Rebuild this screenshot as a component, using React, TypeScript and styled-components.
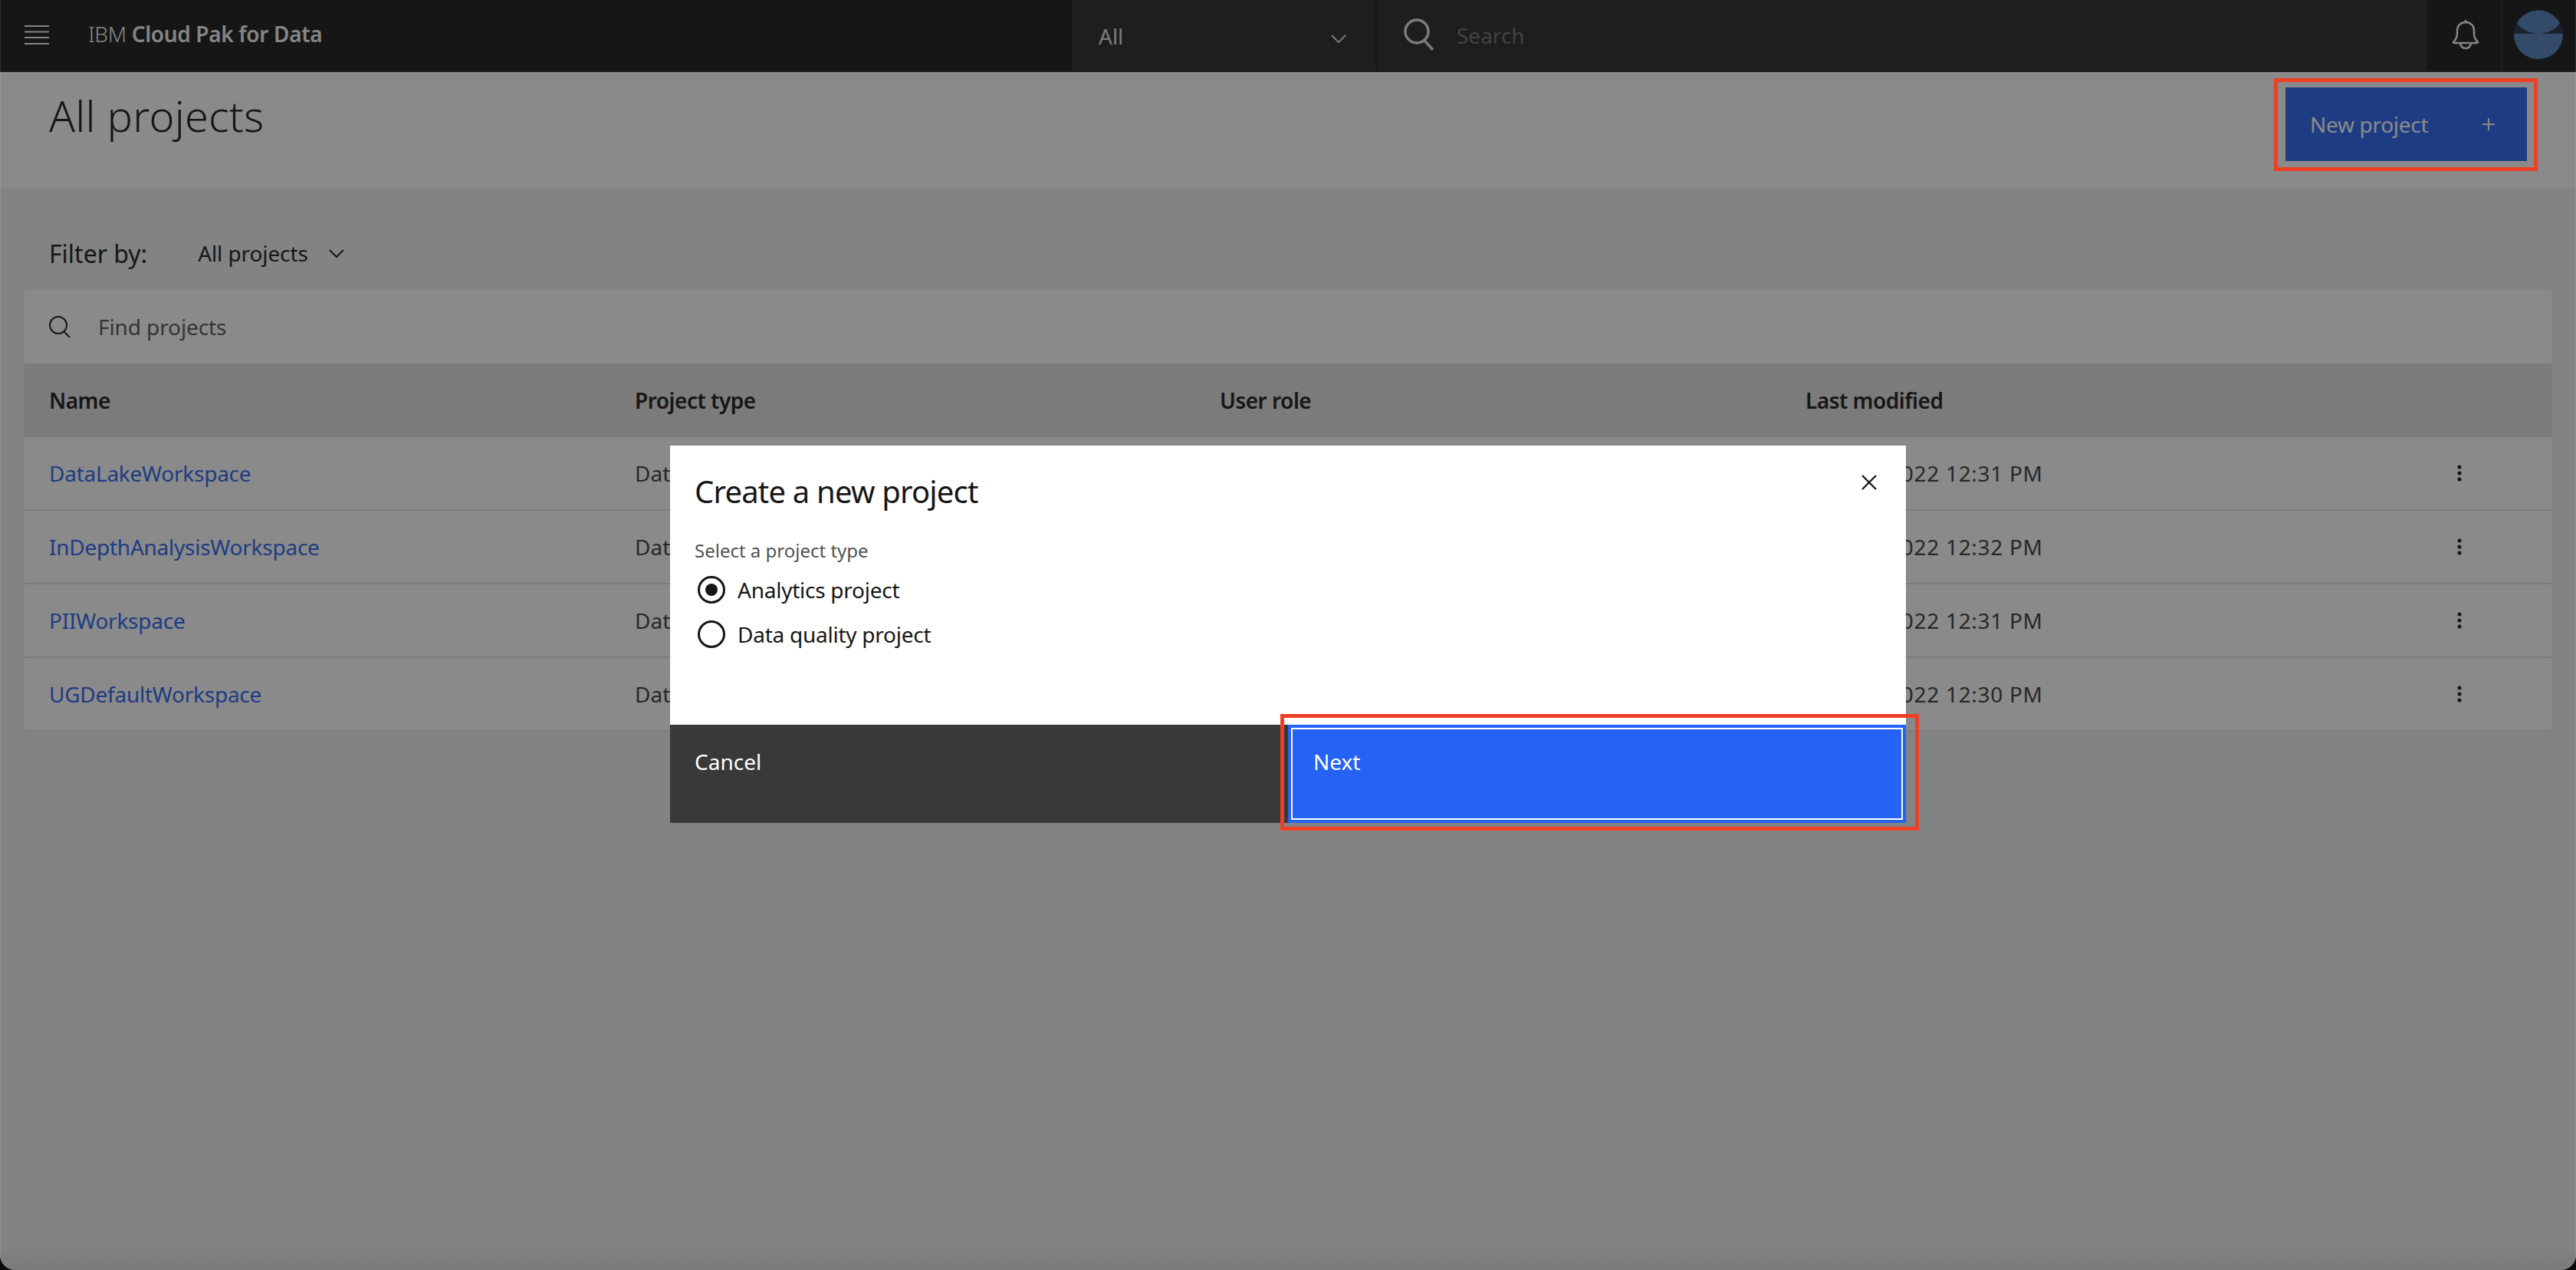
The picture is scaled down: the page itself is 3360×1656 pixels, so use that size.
import React from "react";
import styled, { createGlobalStyle } from "styled-components";

const Global = createGlobalStyle`
  html, body { margin: 0; padding: 0; background: #0c0c0e; }
  body { font-family: "Noto Sans", "Liberation Sans", sans-serif; color: #161616; }
  * { box-sizing: border-box; }
`;

const Page = styled.div`
  position: relative;
  width: 3360px;
  height: 1656px;
  overflow: hidden;
  background: #eef1f0;
  border-radius: 0 0 20px 20px;
  display: flex;
  flex-direction: column;
`;

const TopBar = styled.header`
  height: 94px;
  flex: none;
  display: flex;
  background: #161616;
  border-bottom: 2px solid #262626;
  color: #f4f4f4;
`;
const MenuButton = styled.div`
  width: 115px;
  flex: none;
  padding: 33px 0 0 32px;
`;
const Brand = styled.div`
  width: 1283px;
  flex: none;
  font-size: 28px;
  line-height: 36px;
  padding-top: 26px;
  color: #f4f4f4;
  font-weight: 300;
  letter-spacing: -0.35px;
  b { font-weight: 600; }
`;
const ScopeSelect = styled.div`
  width: 398px;
  flex: none;
  background: #262626;
  border-right: 2px solid #161616;
  display: flex;
  justify-content: space-between;
  padding: 0 38px 0 35px;
  font-size: 28px;
  line-height: 36px;
  color: #e0e0e0;
  span { padding-top: 29px; }
  svg { margin-top: 45px; }
`;
const GlobalSearch = styled.div`
  flex: 1;
  background: #262626;
  display: flex;
  gap: 29px;
  padding: 24px 0 0 35px;
  font-size: 28px;
  line-height: 36px;
  color: #6f6f6f;
  span { padding-top: 4px; }
`;
const BellCell = styled.div`
  width: 98px;
  flex: none;
  border-right: 2px solid #262626;
  padding: 25px 0 0 32px;
`;
const AvatarCell = styled.div`
  width: 95px;
  flex: none;
  margin-left: 1px;
  padding: 13px 0 0 14px;
`;

const PageHead = styled.section`
  height: 152px;
  flex: none;
  background: #fff;
  display: flex;
  justify-content: space-between;
  padding: 20px 64px 0;
`;
const Title = styled.h1`
  margin: 0;
  font-size: 56px;
  line-height: 72px;
  font-weight: 300;
  letter-spacing: 0.2px;
`;
const PrimaryButton = styled.div`
  width: 315px;
  height: 96px;
  background: #2662f0;
  color: #fff;
  display: flex;
  justify-content: space-between;
  padding: 30px 42px 0 32px;
  font-size: 28px;
  line-height: 36px;
  letter-spacing: -0.3px;
`;
const PlusIcon = styled.svg`
  margin-top: 10px;
`;

const Content = styled.main`
  flex: 1;
  padding: 0 32px;
`;
const FilterRow = styled.div`
  height: 132px;
  padding: 36px 32px 0;
  display: flex;
  align-items: center;
  font-size: 32px;
`;
const FilterValue = styled.div`
  margin-left: 66px;
  font-size: 28px;
  display: flex;
  align-items: center;
  gap: 27px;
  letter-spacing: -0.1px;
`;
const FindBar = styled.div`
  height: 96px;
  background: #fff;
  display: flex;
  align-items: center;
  padding-left: 32px;
  gap: 34px;
  font-size: 28px;
  color: #525252;
  letter-spacing: -0.1px;
`;
const TableHeader = styled.div`
  height: 96px;
  background: #e0e0e0;
  display: grid;
  grid-template-columns: 764px 763px 764px 1fr;
  padding-left: 32px;
  align-items: center;
  font-size: 28px;
  font-weight: 600;
  letter-spacing: -0.5px;
`;
const TableRow = styled.div`
  height: 96px;
  background: #fff;
  border-bottom: 2px solid #e0e0e0;
  display: grid;
  grid-template-columns: 764px 763px 764px 1fr 48px;
  padding: 0 96px 0 32px;
  align-items: center;
  font-size: 28px;
  color: #393939;
`;
const ProjectLink = styled.a`
  color: #2662f0;
  text-decoration: none;
  letter-spacing: -0.25px;
`;
const DateCell = styled.div`
  letter-spacing: 0.7px;
`;
const Kebab = styled.div`
  justify-self: center;
  display: flex;
`;

const Overlay = styled.div`
  position: absolute;
  inset: 0;
  background: linear-gradient(to bottom, transparent 1620px, rgba(0, 0, 0, 0.07) 1656px), rgba(22, 22, 22, 0.5);
  box-shadow: inset 1px 0 0 rgba(255, 255, 255, 0.1), inset -1px 0 0 rgba(255, 255, 255, 0.1);
  display: flex;
  justify-content: center;
  padding-top: 581px;
`;
const Modal = styled.div`
  width: 1612px;
  height: 492px;
  background: #fff;
  display: flex;
  flex-direction: column;
  position: relative;
`;
const ModalBody = styled.div`
  flex: 1;
  padding: 32px 32px 0;
`;
const ModalTitle = styled.h2`
  margin: 0;
  font-size: 40px;
  line-height: 56px;
  font-weight: 400;
  letter-spacing: -0.8px;
`;
const FieldLabel = styled.div`
  margin-top: 33px;
  font-size: 24px;
  line-height: 32px;
  color: #525252;
`;
const RadioRow = styled.label`
  display: flex;
  align-items: center;
  height: 58px;
  padding-left: 4px;
  gap: 16px;
  font-size: 28px;
  letter-spacing: -0.25px;
`;
const RadioGroup = styled.div`
  margin-top: 6px;
`;
const RadioMark = styled.span<{ $on?: boolean }>`
  width: 36px;
  height: 36px;
  border-radius: 50%;
  border: 3px solid #161616;
  display: flex;
  align-items: center;
  justify-content: center;
  &::after {
    content: "";
    width: 16px;
    height: 16px;
    border-radius: 50%;
    background: ${(p) => (p.$on ? "#161616" : "transparent")};
  }
`;
const CloseIcon = styled.div`
  position: absolute;
  top: 36px;
  right: 36px;
  width: 24px;
  height: 24px;
`;
const ModalFooter = styled.div`
  height: 128px;
  flex: none;
  display: grid;
  grid-template-columns: 1fr 1fr;
  font-size: 28px;
  line-height: 36px;
  color: #fff;
`;
const CancelButton = styled.div`
  background: #393939;
  padding: 30px 32px 0;
`;
const NextButton = styled.div`
  background: #2563f5;
  padding: 4px;
`;
const NextInner = styled.div`
  height: 100%;
  border: 2px solid #fff;
  padding: 24px 27px 0;
`;

const RedBox = styled.div`
  position: absolute;
  border: 5px solid #ee4025;
  pointer-events: none;
`;
const NewProjectMark = styled(RedBox)`
  left: 2966px;
  top: 102px;
  width: 344px;
  height: 121px;
`;
const NextMark = styled(RedBox)`
  left: 1670px;
  top: 931px;
  width: 833px;
  height: 152px;
`;

const rows = [
  ["DataLakeWorkspace", "Sep 14, 2022 12:31 PM"],
  ["InDepthAnalysisWorkspace", "Sep 14, 2022 12:32 PM"],
  ["PIIWorkspace", "Sep 14, 2022 12:31 PM"],
  ["UGDefaultWorkspace", "Sep 14, 2022 12:30 PM"],
];

const Chevron = ({ w = 20, c = "currentColor" }: { w?: number; c?: string }) => (
  <svg width={w} height={w * 0.55} viewBox="0 0 20 11" fill="none" stroke={c} strokeWidth="2">
    <path d="M1 1l9 9 9-9" />
  </svg>
);

export default function App() {
  return (
    <>
      <Global />
      <Page>
        <TopBar>
          <MenuButton>
            <svg width="32" height="25" viewBox="0 0 32 25" fill="#f4f4f4">
              <rect y="0" width="32" height="2" />
              <rect y="7.5" width="32" height="2" />
              <rect y="15" width="32" height="2" />
              <rect y="23" width="32" height="2" />
            </svg>
          </MenuButton>
          <Brand>
            IBM <b>Cloud Pak for Data</b>
          </Brand>
          <ScopeSelect>
            <span>All</span>
            <Chevron />
          </ScopeSelect>
          <GlobalSearch>
            <svg width="40" height="42" viewBox="0 0 40 42" fill="none" stroke="#e0e0e0" strokeWidth="3.5">
              <circle cx="17" cy="17" r="15" />
              <path d="M27 29l11 12" />
            </svg>
            <span>Search</span>
          </GlobalSearch>
          <BellCell>
            <svg width="36" height="40" viewBox="0 0 36 40" fill="none" stroke="#f4f4f4" strokeWidth="2.6">
              <path d="M18 1v3M2 30c3-3 5-6 5-11v-4C7 8 12 4 18 4s11 4 11 11v4c0 5 2 8 5 11l-1 1H3z" />
              <path d="M11 31c0 4 3 7 7 7s7-3 7-7" />
            </svg>
          </BellCell>
          <AvatarCell>
            <svg width="64" height="64" viewBox="0 0 64 64">
              <circle cx="32" cy="32" r="32" fill="#1e2e42" />
              <path d="M4 17A32 32 0 0 1 60 17C54 26 42 31 32 31C22 31 10 26 4 17Z" fill="#507eba" />
              <path d="M0 31h64v1a32 32 0 0 1-64 0z" fill="#507eba" />
            </svg>
          </AvatarCell>
        </TopBar>
        <PageHead>
          <Title>All projects</Title>
          <PrimaryButton>
            <span>New project</span>
            <PlusIcon width="16" height="16" viewBox="0 0 16 16" fill="#fff">
              <path d="M7 0h2v7h7v2H9v7H7V9H0V7h7z" />
            </PlusIcon>
          </PrimaryButton>
        </PageHead>
        <Content>
          <FilterRow>
            Filter by:
            <FilterValue>
              All projects
              <Chevron w={20} />
            </FilterValue>
          </FilterRow>
          <FindBar>
            <svg width="30" height="28" viewBox="0 0 30 28" fill="none" stroke="#161616" strokeWidth="2">
              <circle cx="12" cy="12" r="11" />
              <path d="M19 20l8 8" />
            </svg>
            Find projects
          </FindBar>
          <TableHeader>
            <div>Name</div>
            <div>Project type</div>
            <div>User role</div>
            <div>Last modified</div>
          </TableHeader>
          {rows.map(([name, date]) => (
            <TableRow key={name}>
              <ProjectLink>{name}</ProjectLink>
              <div>Data</div>
              <div />
              <DateCell>{date}</DateCell>
              <Kebab>
                <svg width="6" height="22" viewBox="0 0 6 22" fill="#161616">
                  <circle cx="3" cy="3" r="2.5" />
                  <circle cx="3" cy="11" r="2.5" />
                  <circle cx="3" cy="19" r="2.5" />
                </svg>
              </Kebab>
            </TableRow>
          ))}
        </Content>
        <Overlay>
          <Modal>
            <ModalBody>
              <ModalTitle>Create a new project</ModalTitle>
              <FieldLabel>Select a project type</FieldLabel>
              <RadioGroup>
                <RadioRow>
                  <RadioMark $on />
                  Analytics project
                </RadioRow>
                <RadioRow>
                  <RadioMark />
                  Data quality project
                </RadioRow>
              </RadioGroup>
            </ModalBody>
            <CloseIcon>
              <svg width="24" height="24" viewBox="0 0 24 24" stroke="#161616" strokeWidth="2.3" fill="none">
                <path d="M3 3l18 18M21 3L3 21" />
              </svg>
            </CloseIcon>
            <ModalFooter>
              <CancelButton>Cancel</CancelButton>
              <NextButton>
                <NextInner>Next</NextInner>
              </NextButton>
            </ModalFooter>
          </Modal>
          <NewProjectMark />
          <NextMark />
        </Overlay>
      </Page>
    </>
  );
}
